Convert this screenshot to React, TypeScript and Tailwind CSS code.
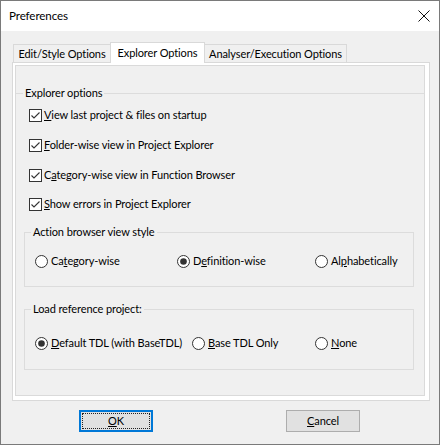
import type { ReactNode } from "react";

const font = { fontFamily: "Lato, 'Noto Sans', sans-serif" };

function CheckBox({ children }: { children: ReactNode }) {
  return (
    <div className="flex h-[16px] items-center pl-[13px]">
      <svg width="13" height="13" viewBox="0 0 13 13" className="shrink-0">
        <rect x="0.5" y="0.5" width="12" height="12" fill="#fff" stroke="#333" />
        <polyline points="2.5,6.5 5,9 10.5,3.5" fill="none" stroke="#333" strokeWidth="1.1" />
      </svg>
      <span className="ml-[2px] whitespace-nowrap">{children}</span>
    </div>
  );
}

function Radio({ checked, children, width }: { checked?: boolean; children: ReactNode; width: string }) {
  return (
    <div className={`flex h-[16px] shrink-0 items-center ${width}`}>
      <svg width="13" height="13" viewBox="0 0 13 13" className="shrink-0">
        <circle cx="6.5" cy="6.5" r="6" fill="#fff" stroke="#333" />
        {checked && <circle cx="6.5" cy="6.5" r="3.3" fill="#333" />}
      </svg>
      <span className="ml-[3px] whitespace-nowrap">{children}</span>
    </div>
  );
}

export default function App() {
  return (
    <div
      className="flex h-[445px] w-[440px] flex-col overflow-hidden border border-[#7a7a7a] bg-[#f0f0f0] text-[11px] leading-[16px] tracking-[-0.1px] text-black"
      style={font}
    >
      {/* title bar */}
      <div className="flex h-[30px] shrink-0 items-center justify-between bg-white pl-[8px] pr-[9px]">
        <span className="text-[11.6px]">Preferences</span>
        <svg width="12" height="12" viewBox="0 0 12 12">
          <path d="M0.5 0.5 L11.5 11.5 M11.5 0.5 L0.5 11.5" stroke="#111" strokeWidth="1" />
        </svg>
      </div>

      {/* tabs */}
      <div className="mt-[11px] flex h-[20px] items-end whitespace-nowrap pl-[12px]">
        <div className="flex h-[18px] w-[98px] items-center justify-center border border-b-0 border-[#d9d9d9] bg-[#f0f0f0] pt-[1px]">
          Edit/Style Options
        </div>
        <div className="relative z-10 -mb-[1px] -ml-[1px] flex h-[21px] w-[95px] items-start justify-center border border-b-0 border-[#d9d9d9] bg-white pt-[2px]">
          Explorer Options
        </div>
        <div className="-ml-[1px] flex h-[18px] w-[143px] items-center justify-center border border-b-0 border-[#d9d9d9] bg-[#f0f0f0] pt-[1px]">
          Analyser/Execution Options
        </div>
      </div>

      {/* tab page */}
      <div className="ml-[11px] h-[339px] w-[418px] border border-[#d9d9d9] bg-white pb-[4px] pl-[2px] pr-[4px] pt-[2px]">
        <div className="h-full border border-[#dadada] bg-[#f0f0f0]">
          <div className="mt-[19px] flex h-[16px] items-center">
            <div className="h-px w-[7px] bg-[#dcdcdc]" />
            <span className="px-[2px]">Explorer options</span>
            <div className="h-px flex-1 bg-[#dcdcdc]" />
          </div>

          <div className="mt-[6px]">
            <CheckBox>
              <u>V</u>iew last project &amp; files on startup
            </CheckBox>
          </div>
          <div className="mt-[14px]">
            <CheckBox>
              <u>F</u>older-wise view in Project Explorer
            </CheckBox>
          </div>
          <div className="mt-[14px]">
            <CheckBox>
              C<u>a</u>tegory-wise view in Function Browser
            </CheckBox>
          </div>
          <div className="mt-[13px]">
            <CheckBox>
              <u>S</u>how errors in Project Explorer
            </CheckBox>
          </div>

          <fieldset className="ml-[8px] mt-[12px] h-[63px] w-[390px] border border-[#dcdcdc] pl-[6px]">
            <legend className="px-[2px] leading-[16px]">Action browser view style</legend>
            <div className="mt-[13px] flex pl-[4px]">
              <Radio width="w-[142px]">
                Ca<u>t</u>egory-wise
              </Radio>
              <Radio checked width="w-[138px]">
                D<u>e</u>finition-wise
              </Radio>
              <Radio width="w-[90px]">
                Al<u>p</u>habetically
              </Radio>
            </div>
          </fieldset>

          <fieldset className="ml-[8px] mt-[14px] h-[69px] w-[390px] border border-[#dcdcdc] pl-[6px]">
            <legend className="px-[2px] leading-[16px]">Load reference project:</legend>
            <div className="mt-[18px] flex pl-[4px]">
              <Radio checked width="w-[157px]">
                <u>D</u>efault TDL (with BaseTDL)
              </Radio>
              <Radio width="w-[123px]">
                <u>B</u>ase TDL Only
              </Radio>
              <Radio width="w-[60px]">
                <u>N</u>one
              </Radio>
            </div>
          </fieldset>
        </div>
      </div>

      {/* buttons */}
      <div className="mt-[9px] flex pl-[78px]">
        <button className="flex h-[22px] w-[74px] items-center justify-center border-2 border-[#0078d7] bg-[#e1e1e1] p-[1px]">
          <span className="flex h-full w-full items-center justify-center border border-dotted border-[#222]">
            <u>O</u>K
          </span>
        </button>
        <button className="ml-[133px] flex h-[22px] w-[74px] items-center justify-center border border-[#adadad] bg-[#e1e1e1]">
          <span>
            <u>C</u>ancel
          </span>
        </button>
      </div>
    </div>
  );
}
